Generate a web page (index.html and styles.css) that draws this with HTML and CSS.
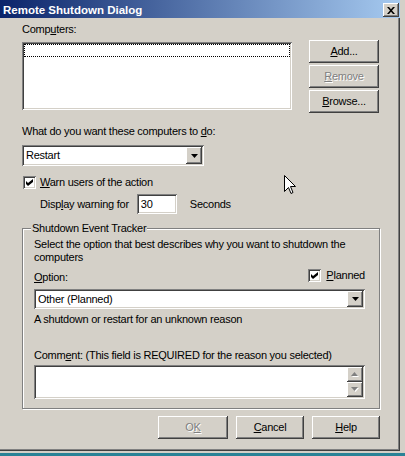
FILE: index.html
```html
<!DOCTYPE html>
<html lang="en">
<head>
  <meta charset="UTF-8" />
  <meta name="viewport" content="width=device-width, initial-scale=1.0" />
  <title>Remote Shutdown Dialog</title>
  <link rel="stylesheet" href="styles.css">
</head>
<body>
  <div class="window">
    <div class="titlebar">
      <span class="title">Remote Shutdown Dialog</span>
      <span class="close raised">
        <svg width="8" height="7" viewBox="0 0 8 7"><path d="M0 0h2l2 2.3 2-2.3h2l-3 3.5 3 3.5h-2l-2-2.3-2 2.3h-2l3-3.5z" fill="#000"/></svg>
      </span>
    </div>
    <div class="client">
      <div class="computers">
        <div class="list-col">
          <div class="label">Comp<u>u</u>ters:</div>
          <div class="listbox sunken"><div class="focus-row"></div></div>
        </div>
        <div class="side-buttons">
          <div class="btn raised"><u>A</u>dd...</div>
          <div class="btn raised disabled"><u>R</u>emove</div>
          <div class="btn raised"><u>B</u>rowse...</div>
        </div>
      </div>

      <div class="label action-label">What do you want these computers to <u>d</u>o:</div>
      <div class="combo sunken action-combo">
        <span class="combo-text">Restart</span>
        <span class="combo-btn raised"><svg width="7" height="4" viewBox="0 0 7 4"><path d="M0 0h7l-3.5 4z" fill="#000"/></svg></span>
      </div>

      <div class="check-row warn-row">
        <span class="checkbox sunken"><svg width="7" height="7" viewBox="0 0 7 7"><path d="M0 2l2 2 5-4v3l-5 4-2-2z" fill="#000"/></svg></span>
        <span><u>W</u>arn users of the action</span>
      </div>
      <div class="warn-time">
        <span>Disp<u>l</u>ay warning for</span>
        <div class="field sunken">30</div>
        <span>Seconds</span>
      </div>

      <fieldset class="tracker">
        <legend>Shutdown Event Tracker</legend>
        <div class="desc">Select the option that best describes why you want to shutdown the computers</div>
        <div class="option-row">
          <span class="option-label"><u>O</u>ption:</span>
          <span class="check-row">
            <span class="checkbox sunken"><svg width="7" height="7" viewBox="0 0 7 7"><path d="M0 2l2 2 5-4v3l-5 4-2-2z" fill="#000"/></svg></span>
            <span><u>P</u>lanned</span>
          </span>
        </div>
        <div class="combo sunken reason-combo">
          <span class="combo-text">Other (Planned)</span>
          <span class="combo-btn raised"><svg width="7" height="4" viewBox="0 0 7 4"><path d="M0 0h7l-3.5 4z" fill="#000"/></svg></span>
        </div>
        <div class="reason">A shutdown or restart for an unknown reason</div>
        <div class="label comment-label">Comm<u>e</u>nt: (This field is REQUIRED for the reason you selected)</div>
        <div class="comment sunken">
          <div class="scrollbar">
            <span class="scroll-btn raised"><svg width="8" height="5" viewBox="0 0 8 5"><path d="M4.5 1l3.5 4h-7z" fill="#fff"/><path d="M3.5 0l3.5 4h-7z" fill="#808080"/></svg></span>
            <span class="scroll-btn raised"><svg width="8" height="5" viewBox="0 0 8 5"><path d="M1 1h7l-3.5 4z" fill="#fff"/><path d="M0 0h7l-3.5 4z" fill="#808080"/></svg></span>
          </div>
        </div>
      </fieldset>

      <div class="dialog-buttons">
        <div class="btn raised disabled ok">O<u>K</u></div>
        <div class="btn raised"><u>C</u>ancel</div>
        <div class="btn raised"><u>H</u>elp</div>
      </div>
    </div>
  </div>

  <svg class="cursor" width="13" height="20" viewBox="0 0 13 20">
    <path d="M0.5 0.5V16.5L4.5 12.5L7 18.5L9 17.5L6.5 11.5H11.5Z" fill="#fff" stroke="#000" stroke-width="1"/>
  </svg>
</body>
</html>
```

FILE: styles.css
```css
body {
  margin: 0;
  font-family: "Liberation Sans", Arial, sans-serif;
  font-size: 11px;
  line-height: 13px;
  letter-spacing: -0.25px;
  color: #000;
  background: #2a8296 linear-gradient(#d4d0c8, #d4d0c8) no-repeat 0 0 / 100% 453px;
}
.window {
  width: 400px;
  height: 451px;
  background: #d4d0c8;
  box-shadow: inset -1px -1px #404040, inset -2px -2px #808080;
}
.raised {
  background: #d4d0c8;
  box-shadow: inset -1px -1px #404040, inset 1px 1px #fff, inset -2px -2px #808080, inset 2px 2px #d4d0c8;
}
.sunken {
  background: #fff;
  box-shadow: inset 1px 1px #808080, inset -1px -1px #fff, inset 2px 2px #404040, inset -2px -2px #d4d0c8;
}

/* title bar */
.titlebar {
  height: 18px;
  display: flex;
  justify-content: space-between;
  padding: 0 1px 0 3px;
  background: linear-gradient(to right, #0a246a, #a6caf0);
}
.title {
  padding-top: 3px;
  line-height: 15px;
  font-size: 11.5px;
  font-weight: bold;
  letter-spacing: 0;
  color: #fff;
}
.close {
  width: 16px;
  height: 14px;
  margin-top: 3px;
  display: flex;
  align-items: center;
  justify-content: center;
}

/* client area */
.client {
  padding: 5px 20px 0 22px;
}
u {
  text-decoration: underline;
}
.computers {
  display: flex;
  gap: 17px;
}
.list-col {
  width: 270px;
}
.listbox {
  height: 68px;
  margin-top: 6px;
  padding: 2px;
  box-sizing: border-box;
}
.focus-row {
  height: 13px;
  box-sizing: border-box;
  border: 1px dotted #000;
}
.side-buttons {
  width: 70px;
  padding-top: 17px;
  display: flex;
  flex-direction: column;
  gap: 2px;
}
.btn {
  height: 23px;
  display: flex;
  align-items: center;
  justify-content: center;
}
.disabled {
  color: #808080;
  text-shadow: 1px 1px 0 #fff;
}

.action-label {
  margin-top: 12px;
}
.combo {
  display: flex;
  padding: 2px;
  box-sizing: border-box;
}
.combo-text {
  flex: 1;
  padding-left: 2px;
}
.combo-btn {
  width: 16px;
  display: flex;
  align-items: center;
  justify-content: center;
}
.action-combo {
  width: 182px;
  height: 21px;
  margin-top: 7px;
  line-height: 17px;
}

.check-row {
  display: flex;
  align-items: center;
  gap: 4px;
}
.checkbox {
  width: 13px;
  height: 13px;
  display: flex;
  align-items: center;
  justify-content: center;
}
.warn-row {
  margin: 10px 0 0 1px;
}
.warn-time {
  margin-top: 5px;
  padding-left: 18px;
  display: flex;
  align-items: center;
}
.field {
  width: 40px;
  height: 20px;
  box-sizing: border-box;
  padding: 2px 0 0 4px;
  line-height: 16px;
  margin: 0 13px 0 8px;
}

/* shutdown event tracker group */
.tracker {
  margin: 8px 0 0;
  padding: 3px 14px 9px 11px;
  border: 1px solid #808080;
  box-shadow: inset 1px 1px #fff, 1px 1px #fff;
  min-width: 0;
}
.tracker legend {
  margin-left: -3px;
  padding: 0 1px;
  line-height: 13px;
  background: #d4d0c8;
}
.option-row {
  margin-top: 5px;
  display: flex;
  justify-content: space-between;
  align-items: flex-start;
}
.option-label {
  margin-top: 2px;
}
.option-row .check-row {
  gap: 5px;
}
.reason-combo {
  height: 20px;
  margin-top: 5px;
  line-height: 16px;
}
.reason {
  margin-top: 4px;
}
.comment-label {
  margin-top: 23px;
}
.comment {
  height: 34px;
  margin-top: 3px;
  padding: 2px;
  box-sizing: border-box;
  display: flex;
  justify-content: flex-end;
}
.scrollbar {
  width: 16px;
  display: flex;
  flex-direction: column;
}
.scroll-btn {
  flex: 1;
  display: flex;
  align-items: center;
  justify-content: center;
}

.dialog-buttons {
  margin-top: 7px;
  display: flex;
  justify-content: flex-end;
  gap: 8px;
}
.dialog-buttons .btn {
  width: 68px;
}
.dialog-buttons .ok {
  width: 70px;
}

.cursor {
  position: absolute;
  left: 284px;
  top: 175px;
}
```
